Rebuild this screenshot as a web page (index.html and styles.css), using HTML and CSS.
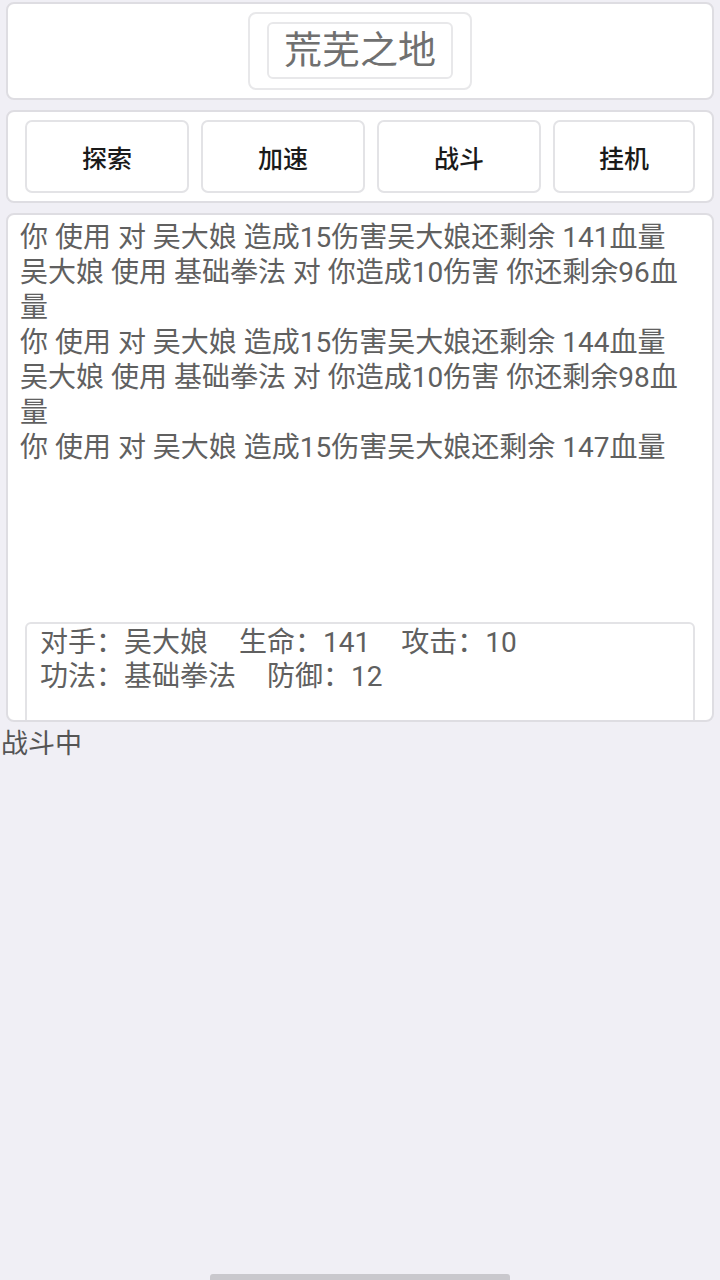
FILE: index.html
```html
<!DOCTYPE html>
<html>

<head>
    <meta charset="utf-8">
    <title>荒芜之地</title>
    <link rel="stylesheet" href="styles.css">
</head>

<body>
    <div class="panel title-panel">
        <div class="title-outer">
            <div class="title-inner">荒芜之地</div>
        </div>
    </div>

    <div class="panel action-panel">
        <button class="action-btn">探索</button>
        <button class="action-btn">加速</button>
        <button class="action-btn">战斗</button>
        <button class="action-btn">挂机</button>
    </div>

    <div class="panel battle-panel">
        <div id="log" class="log">
            <div>你 使用 对 吴大娘 造成15伤害吴大娘还剩余 141血量</div>
            <div>吴大娘 使用 基础拳法 对 你造成10伤害 你还剩余96血量</div>
            <div>你 使用 对 吴大娘 造成15伤害吴大娘还剩余 144血量</div>
            <div>吴大娘 使用 基础拳法 对 你造成10伤害 你还剩余98血量</div>
            <div>你 使用 对 吴大娘 造成15伤害吴大娘还剩余 147血量</div>
        </div>
        <div class="enemy-box">
            <div class="enemy-row">
                <span class="stat">对手：吴大娘</span>
                <span class="stat">生命：141</span>
                <span class="stat">攻击：10</span>
            </div>
            <div class="enemy-row">
                <span class="stat">功法：基础拳法</span>
                <span class="stat">防御：12</span>
            </div>
        </div>
    </div>

    <div id="status" class="status">战斗中</div>

    <div class="home-bar"></div>
</body>

</html>
```

FILE: styles.css
```css
body {
    margin: 0;
    min-height: 1280px;
    background-color: #f0eff5;
    font-family: Roboto, "Noto Sans CJK SC", sans-serif;
    color: #555;
}

.panel {
    box-sizing: border-box;
    margin: 0 6px 10px;
    background-color: #ffffff;
    border: 2px solid #dedde2;
    border-radius: 8px;
}

/* title */
.title-panel {
    margin-top: 2px;
    height: 98px;
    display: flex;
    justify-content: center;
    align-items: center;
}

.title-outer {
    box-sizing: border-box;
    height: 78px;
    padding: 8px 17px;
    border: 2px solid #e8e8ea;
    border-radius: 8px;
}

.title-inner {
    box-sizing: border-box;
    height: 57px;
    padding: 0 15px;
    border: 2px solid #e8e8ea;
    border-radius: 6px;
    font-size: 38px;
    line-height: 53px;
    color: #707070;
}

/* buttons */
.action-panel {
    height: 93px;
    display: flex;
    align-items: center;
    gap: 12px;
    padding: 0 17px;
}

.action-btn {
    box-sizing: border-box;
    width: 164px;
    height: 73px;
    padding: 0;
    background-color: #ffffff;
    border: 2px solid #e3e3e6;
    border-radius: 7px;
    font-family: Roboto, "Noto Sans CJK SC", sans-serif;
    font-size: 25px;
    font-weight: 500;
    color: #1a1a1a;
}

.action-btn:last-child {
    width: 142px;
}

/* battle log */
.battle-panel {
    height: 509px;
    margin-bottom: 7px;
    overflow: hidden;
}

.log {
    box-sizing: border-box;
    height: 407px;
    padding: 5px 12px 0;
    font-size: 28px;
    line-height: 35px;
    color: #606060;
}

.enemy-box {
    box-sizing: border-box;
    height: 110px;
    margin: 0 17px;
    padding: 2px 13px;
    border: 2px solid #e3e3e6;
    border-radius: 6px;
    font-size: 28px;
    line-height: 34px;
    color: #606060;
}

.stat {
    margin-right: 24px;
}

.status {
    font-size: 27px;
    line-height: 30px;
    padding-left: 1px;
    color: #555;
}

/* system home indicator */
.home-bar {
    position: fixed;
    left: 210px;
    bottom: 0;
    width: 300px;
    height: 6px;
    border-radius: 3px 3px 0 0;
    background-color: #c9c8cd;
}
```
